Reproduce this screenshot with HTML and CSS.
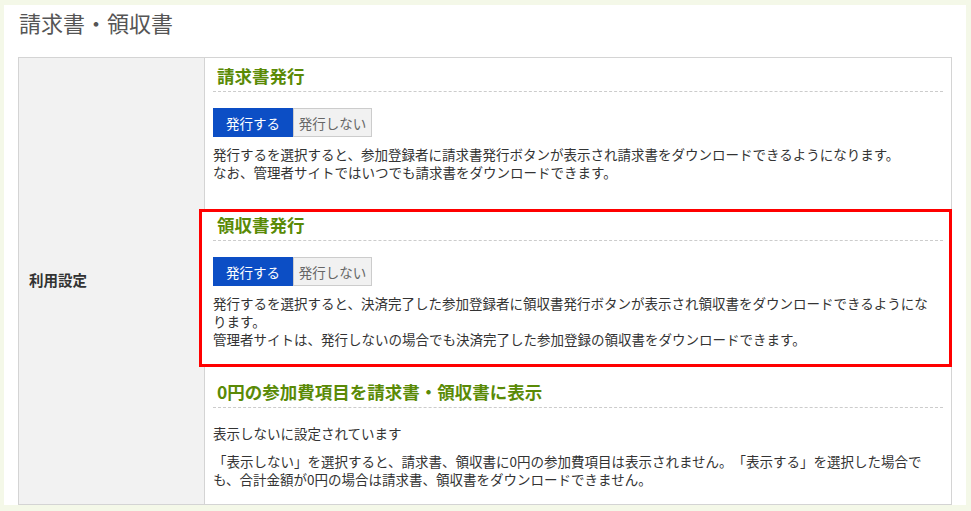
FILE: index.html
```html
<!DOCTYPE html>
<html lang="ja">
<head>
    <meta charset="UTF-8">
    <meta name="viewport" content="width=device-width, initial-scale=1.0">
    <title>請求書・領収書</title>
    <link rel="stylesheet" href="styles.css">
</head>
<body>
    <div class="panel">
        <h1 class="panel-title">請求書・領収書</h1>
        <div class="setting-table">
            <div class="setting-label">利用設定</div>
            <div class="setting-body">
                <div class="setting-section">
                    <h2 class="section-title">請求書発行</h2>
                    <div class="toggle">
                        <button type="button" class="toggle-button active">発行する</button>
                        <button type="button" class="toggle-button">発行しない</button>
                    </div>
                    <p class="section-note">発行するを選択すると、参加登録者に請求書発行ボタンが表示され請求書をダウンロードできるようになります。<br>なお、管理者サイトではいつでも請求書をダウンロードできます。</p>
                </div>

                <div class="setting-section highlight">
                    <h2 class="section-title">領収書発行</h2>
                    <div class="toggle">
                        <button type="button" class="toggle-button active">発行する</button>
                        <button type="button" class="toggle-button">発行しない</button>
                    </div>
                    <p class="section-note">発行するを選択すると、決済完了した参加登録者に領収書発行ボタンが表示され領収書をダウンロードできるようになります。<br>管理者サイトは、発行しないの場合でも決済完了した参加登録の領収書をダウンロードできます。</p>
                </div>

                <div class="setting-section">
                    <h2 class="section-title">0円の参加費項目を請求書・領収書に表示</h2>
                    <p class="section-status">表示しないに設定されています</p>
                    <p class="section-note">「表示しない」を選択すると、請求書、領収書に0円の参加費項目は表示されません。「表示する」を選択した場合でも、合計金額が0円の場合は請求書、領収書をダウンロードできません。</p>
                </div>
            </div>
        </div>
    </div>
</body>
</html>
```

FILE: styles.css
```css
body {
    font-family: "Noto Sans CJK JP", "Noto Sans", sans-serif;
    margin: 0;
    padding: 0;
    background-color: #f4f8e8;
    color: #333;
    text-spacing-trim: space-all;
}
.panel {
    margin: 5px 0 0 4px;
    width: 962px;
    height: 500px;
    background-color: #fff;
    padding: 2px 14px 0 14px;
    box-sizing: border-box;
    overflow: hidden;
}
.panel-title {
    margin: 0 0 20px 1px;
    font-size: 22px;
    line-height: 30px;
    font-weight: normal;
    color: #555;
}
.setting-table {
    display: flex;
    border: 1px solid #d4d4d4;
}
.setting-label {
    width: 186px;
    flex-shrink: 0;
    background-color: #f2f2f2;
    border-right: 1px solid #d4d4d4;
    padding: 0 0 4px 10px;
    box-sizing: border-box;
    display: flex;
    align-items: center;
    font-size: 14.5px;
    font-weight: bold;
}
.setting-body {
    flex: 1;
    padding: 6px 8px 16px 8px;
}
.setting-section {
    margin-bottom: 28px;
}
.setting-section:last-child {
    margin-bottom: 0;
}
.setting-section.highlight {
    margin: 0 -9px 13px -14px;
    padding: 1px 6px 16px 11px;
    border: 3px solid #f00;
    background-color: #fff;
    position: relative;
}
.section-title {
    margin: 0;
    padding: 0 4px 3px;
    font-size: 17.5px;
    line-height: 24px;
    color: #5a8a06;
    border-bottom: 1px dashed #ccc;
}
.toggle {
    display: flex;
    margin-top: 16px;
}
.toggle-button {
    width: 80px;
    height: 29px;
    padding: 0;
    font-family: inherit;
    font-size: 13.5px;
    border: 1px solid #ccc;
    background-color: #f1f1f1;
    color: #666;
}
.toggle-button + .toggle-button {
    width: 79px;
}
.toggle-button.active {
    background-color: #0c4ec5;
    border-color: #0c4ec5;
    color: #fff;
}
.section-note {
    margin: 8px 6px 0 0;
    font-size: 13.5px;
    line-height: 18px;
}
.section-status {
    margin: 16px 0 0;
    font-size: 13.5px;
    line-height: 18px;
}
.section-status + .section-note {
    margin-top: 10px;
}
```
